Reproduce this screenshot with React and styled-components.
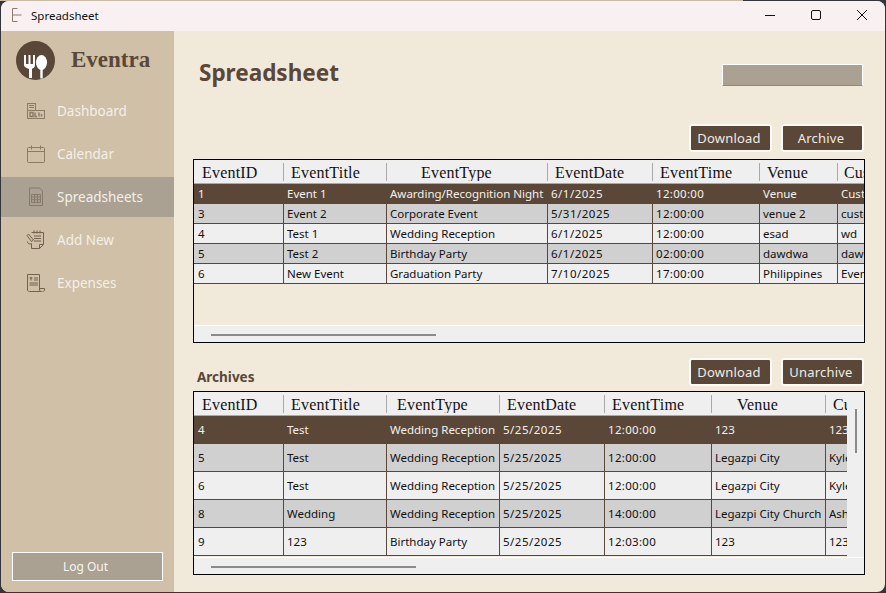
import React from 'react';
import styled, { createGlobalStyle } from 'styled-components';

const GlobalStyle = createGlobalStyle`
  html, body {
    margin: 0;
    padding: 0;
    height: 100%;
    overflow: hidden;
  }
  * {
    box-sizing: border-box;
  }
`;

const BROWN = '#5a4738';
const TAN = '#cfc0a7';
const TAUPE = '#aaa193';
const CREAM = '#f1e9da';
const UI_FONT = '"Noto Sans", "Open Sans", sans-serif';
const HEAD_FONT = '"Liberation Serif", serif';

const mainColumns = [
  { title: 'EventID', width: 90, pad: 8 },
  { title: 'EventTitle', width: 103, pad: 7 },
  { title: 'EventType', width: 161, pad: 34 },
  { title: 'EventDate', width: 105, pad: 7, tracking: 0.5 },
  { title: 'EventTime', width: 107, pad: 7, tracking: 0.3 },
  { title: 'Venue', width: 78, pad: 7 },
  { title: 'Customer', width: 90, pad: 6 },
];

const archiveColumns = [
  { title: 'EventID', width: 90, pad: 8 },
  { title: 'EventTitle', width: 103, pad: 7 },
  { title: 'EventType', width: 113, pad: 10 },
  { title: 'EventDate', width: 105, pad: 7, tracking: 0.5 },
  { title: 'EventTime', width: 107, pad: 7, tracking: 0.3 },
  { title: 'Venue', width: 114, pad: 25 },
  { title: 'Customer', width: 90, pad: 7 },
];

const mainRows = [
  ['1', 'Event 1', 'Awarding/Recognition Night', '6/1/2025', '12:00:00', 'Venue', 'Customer'],
  ['3', 'Event 2', 'Corporate Event', '5/31/2025', '12:00:00', 'venue 2', 'customer 2'],
  ['4', 'Test 1', 'Wedding Reception', '6/1/2025', '12:00:00', 'esad', 'wd'],
  ['5', 'Test 2', 'Birthday Party', '6/1/2025', '02:00:00', 'dawdwa', 'dawdwa'],
  ['6', 'New Event', 'Graduation Party', '7/10/2025', '17:00:00', 'Philippines', 'Event'],
];

const archiveRows = [
  ['4', 'Test', 'Wedding Reception', '5/25/2025', '12:00:00', '123', '123'],
  ['5', 'Test', 'Wedding Reception', '5/25/2025', '12:00:00', 'Legazpi City', 'Kyle'],
  ['6', 'Test', 'Wedding Reception', '5/25/2025', '12:00:00', 'Legazpi City', 'Kyle'],
  ['8', 'Wedding', 'Wedding Reception', '5/25/2025', '14:00:00', 'Legazpi City Church', 'Ashley'],
  ['9', '123', 'Birthday Party', '5/25/2025', '12:03:00', '123', '123'],
];

const DashboardIcon = () => (
  <svg width="20" height="18" viewBox="0 0 20 18" fill="none" stroke="#8b7a66" strokeWidth="1">
    <rect x="1.500" y="1.500" width="8" height="7" />
    <path d="M3 3.500h5M3 5.500h5" />
    <rect x="1.500" y="8.500" width="17" height="8" />
    <path d="M4 10.500h3v4H4zM9 10.500v4h2M13 10.500v4M15.500 12v2.500" strokeWidth="1.400" />
  </svg>
);

const CalendarIcon = () => (
  <svg width="20" height="20" viewBox="0 0 20 20" fill="none" stroke="#8b7a66" strokeWidth="1">
    <rect x="1.500" y="3.500" width="17" height="15" rx="1" />
    <path d="M1.500 7.500h17M5.500 1.500v4M14.500 1.500v4" />
  </svg>
);

const SheetIcon = () => (
  <svg width="20" height="20" viewBox="0 0 20 20" fill="none" stroke="#857a6b" strokeWidth="1">
    <path d="M3.500 1h10l3 3v14.500h-13z" />
    <path d="M5.500 7.500h9v8h-9zM5.500 10h9M5.500 12.700h9M8.500 7.500v8M11.500 7.500v8" />
  </svg>
);

const AddNewIcon = () => (
  <svg width="20" height="20" viewBox="0 0 20 20" fill="none" stroke="#75614d" strokeWidth="1">
    <path d="M5.500 2.500h12v12l-4 4h-8v-5" />
    <path d="M8 .5v3M11 .5v3M14 .5v3M8 6h7M8 8.500h7M8 11h7M13.500 18.500v-4h4" />
    <path d="M1 5.500l1.500-1.500 5 6-2 1.500z" />
    <path d="M1.500 11.500c0 2 1 2.500 4 2.500" />
  </svg>
);

const ExpensesIcon = () => (
  <svg width="20" height="20" viewBox="0 0 20 20" fill="none" stroke="#75614d" strokeWidth="1">
    <path d="M1.500 1.500h12v15.500c0 1 1 1.500 2 1.500H3.500c-1 0-2-.5-2-1.500z" />
    <path d="M13.500 15.500h5v1.500c0 1-1 1.500-2 1.500" />
    <path d="M5 4v3.500M3.500 5h3M8 5h4M8 7h4M3.500 10h8.500M3.500 12h8.500" />
  </svg>
);

const LogoMark = () => (
  <svg width="39" height="39" viewBox="0 0 39 39">
    <circle cx="19.500" cy="19.500" r="19.500" fill={BROWN} />
    <path
      d="M8 14h2v9h2.500v-9h2v9H17v-9h2v10c0 2-1.500 3.500-3 3.800V37h-3v-9.200c-2-.3-5-1.800-5-3.800z"
      fill="#ffffff"
    />
    <ellipse cx="25.500" cy="21.500" rx="5.500" ry="7.500" fill="#ffffff" />
    <rect x="24.300" y="27" width="2.400" height="10.500" fill="#ffffff" />
  </svg>
);

const navItems = [
  { label: 'Dashboard', icon: <DashboardIcon /> },
  { label: 'Calendar', icon: <CalendarIcon /> },
  { label: 'Spreadsheets', icon: <SheetIcon />, active: true },
  { label: 'Add New', icon: <AddNewIcon /> },
  { label: 'Expenses', icon: <ExpensesIcon /> },
];

const DataTable = ({ columns, rows, rowHeight, thumbWidth, vertical }) => {
  const template = columns.map((c) => `${c.width}px`).join(' ');
  return (
    <TableBox>
      <TableBody>
        <TableViewport>
          <HeaderRow $template={template}>
            {columns.map((c) => (
              <HeaderCell key={c.title} $pad={c.pad}>{c.title}</HeaderCell>
            ))}
          </HeaderRow>
          {rows.map((row, i) => (
            <DataRow key={row[0]} $template={template} $height={rowHeight} $index={i}>
              {row.map((value, j) => (
                <DataCell key={j} $tracking={columns[j].tracking}>{value}</DataCell>
              ))}
            </DataRow>
          ))}
        </TableViewport>
        {vertical && (
          <VerticalTrack>
            <VerticalThumb />
          </VerticalTrack>
        )}
      </TableBody>
      <HorizontalTrack>
        <HorizontalThumb style={{ width: thumbWidth }} />
      </HorizontalTrack>
    </TableBox>
  );
};

const App = () => (
  <Screen>
    <GlobalStyle />
    <AppWindow>
      <TitleBar>
        <TitleLeft>
          <svg width="14" height="16" viewBox="0 0 14 16" fill="none" stroke="#8a7a72" strokeWidth="1">
            <path d="M2.500 1.500h5M2.500 1.500v13M2.500 14.500h5M2.500 8h9" />
          </svg>
          <span>Spreadsheet</span>
        </TitleLeft>
        <WindowControls>
          <WindowButton aria-label="Minimize">
            <svg width="12" height="12" viewBox="0 0 12 12" stroke="#111" strokeWidth="1">
              <path d="M1 6.500h10" />
            </svg>
          </WindowButton>
          <WindowButton aria-label="Maximize">
            <svg width="12" height="12" viewBox="0 0 12 12" fill="none" stroke="#111" strokeWidth="1">
              <rect x="1.500" y="1.500" width="9" height="9" rx="1.500" />
            </svg>
          </WindowButton>
          <WindowButton aria-label="Close">
            <svg width="12" height="12" viewBox="0 0 12 12" stroke="#111" strokeWidth="1">
              <path d="M1 1l10 10M11 1L1 11" />
            </svg>
          </WindowButton>
        </WindowControls>
      </TitleBar>
      <Layout>
        <Sidebar>
          <Brand>
            <LogoMark />
            <BrandName>Eventra</BrandName>
          </Brand>
          <NavList>
            {navItems.map((item) => (
              <NavItem key={item.label} $active={item.active}>
                <NavIcon>{item.icon}</NavIcon>
                <span>{item.label}</span>
              </NavItem>
            ))}
          </NavList>
          <LogOutButton>Log Out</LogOutButton>
        </Sidebar>
        <Main>
          <PageHeader>
            <PageTitle>Spreadsheet</PageTitle>
            <SearchBox />
          </PageHeader>
          <Toolbar>
            <ActionButton>Download</ActionButton>
            <ActionButton>Archive</ActionButton>
          </Toolbar>
          <DataTable columns={mainColumns} rows={mainRows} rowHeight={20} thumbWidth={225} />
          <ArchiveToolbar>
            <SectionLabel>Archives</SectionLabel>
            <ActionButton>Download</ActionButton>
            <ActionButton>Unarchive</ActionButton>
          </ArchiveToolbar>
          <DataTable columns={archiveColumns} rows={archiveRows} rowHeight={28} thumbWidth={205} vertical />
        </Main>
      </Layout>
    </AppWindow>
  </Screen>
);

const Screen = styled.div`
  width: 100vw;
  height: 100vh;
  padding: 1px;
  background:
    linear-gradient(90deg, #c9bba6 743px, #34343a 743px) top / 100% 1px no-repeat,
    #34343a;
  font-family: ${UI_FONT};
`;

const AppWindow = styled.div`
  height: 100%;
  display: flex;
  flex-direction: column;
  border-radius: 8px;
  overflow: hidden;
  background: ${CREAM};
`;

const TitleBar = styled.div`
  height: 30px;
  flex: none;
  display: flex;
  align-items: center;
  justify-content: space-between;
  padding-bottom: 2px;
  background: #f9f0f1;
  color: #111;
  font-size: 11.500px;
`;

const TitleLeft = styled.div`
  display: flex;
  align-items: center;
  gap: 7px;
  padding-left: 9px;
`;

const WindowControls = styled.div`
  display: flex;
  height: 100%;
`;

const WindowButton = styled.div`
  width: 46px;
  display: flex;
  align-items: center;
  justify-content: center;
`;

const Layout = styled.div`
  flex: 1;
  display: flex;
  min-height: 0;
`;

const Sidebar = styled.aside`
  width: 173px;
  flex: none;
  display: flex;
  flex-direction: column;
  background: ${TAN};
`;

const Brand = styled.div`
  display: flex;
  align-items: center;
  gap: 16px;
  padding: 10px 0 0 15px;
`;

const BrandName = styled.div`
  font-family: ${HEAD_FONT};
  font-weight: 700;
  font-size: 23px;
  color: ${BROWN};
  margin-bottom: 2px;
`;

const NavList = styled.nav`
  display: flex;
  flex-direction: column;
  gap: 3px;
  margin-top: 11px;
`;

const NavItem = styled.div`
  height: 40px;
  display: flex;
  align-items: center;
  gap: 11px;
  padding-left: 25px;
  font-size: 13.500px;
  color: #f4f0e8;
  background: ${(p) => (p.$active ? TAUPE : 'transparent')};
`;

const NavIcon = styled.div`
  width: 20px;
  height: 20px;
  display: flex;
  align-items: center;
  justify-content: center;
`;

const LogOutButton = styled.div`
  margin: auto 0 11px 11px;
  width: 151px;
  height: 29px;
  display: flex;
  align-items: center;
  justify-content: center;
  padding: 0 4px 1px 0;
  border: 1px solid #ffffff;
  background: ${TAUPE};
  color: #f8f5ef;
  font-size: 12px;
`;

const Main = styled.main`
  flex: 1;
  min-width: 0;
  display: flex;
  flex-direction: column;
  padding-left: 19px;
  padding-right: 20px;
`;

const PageHeader = styled.div`
  height: 93px;
  flex: none;
  display: flex;
  justify-content: space-between;
  padding: 25px 2px 0 6px;
`;

const PageTitle = styled.h1`
  margin: 0;
  font-size: 22.500px;
  line-height: 33px;
  font-weight: 700;
  color: ${BROWN};
`;

const SearchBox = styled.div`
  width: 141px;
  height: 22px;
  margin-top: 8px;
  background: ${TAUPE};
  border: 1px solid #ffffff;
  border-bottom-color: #8f8a80;
`;

const Toolbar = styled.div`
  height: 28px;
  flex: none;
  display: flex;
  justify-content: flex-end;
  gap: 9px;
  margin: 0 1px 7px 0;
`;

const ArchiveToolbar = styled(Toolbar)`
  margin-top: 15px;
  margin-bottom: 5px;
  align-items: stretch;
`;

const SectionLabel = styled.div`
  margin-right: auto;
  padding: 11px 0 0 4px;
  font-size: 13.500px;
  font-weight: 700;
  line-height: 16px;
  color: ${BROWN};
`;

const ActionButton = styled.div`
  width: 83px;
  display: flex;
  align-items: center;
  justify-content: center;
  padding-right: 3px;
  border: 2px solid #fbfaf7;
  border-radius: 3px;
  background: ${BROWN};
  color: #efece6;
  font-size: 13px;
  letter-spacing: 0.2px;
`;

const TableBox = styled.div`
  height: 184px;
  flex: none;
  display: flex;
  flex-direction: column;
  border: 1px solid #000;
  overflow: hidden;
`;

const TableBody = styled.div`
  height: 165px;
  flex: none;
  display: flex;
  min-width: 0;
`;

const TableViewport = styled.div`
  flex: 1;
  min-width: 0;
  overflow: hidden;
`;

const HeaderRow = styled.div`
  display: grid;
  grid-template-columns: ${(p) => p.$template};
  height: 24px;
  align-items: center;
  background: #efefef;
  border-bottom: 1px solid #a9a9a9;
  font-family: ${HEAD_FONT};
  font-size: 16px;
  letter-spacing: 0.2px;
  color: #111;
`;

const HeaderCell = styled.div`
  height: 18px;
  line-height: 20px;
  padding-left: ${(p) => p.$pad}px;
  border-right: 1px solid #a9a9a9;
  white-space: nowrap;
  overflow: hidden;
  &:last-child {
    border-right: none;
  }
`;

const rowBackground = (p) => {
  if (p.$index === 0) return BROWN;
  return p.$index % 2 === 1 ? '#d0d0d0' : '#efefef';
};

const DataRow = styled.div`
  display: grid;
  grid-template-columns: ${(p) => p.$template};
  height: ${(p) => p.$height}px;
  background: ${rowBackground};
  color: ${(p) => (p.$index === 0 ? '#f4f1ec' : '#111')};
  border-bottom: 1px solid ${BROWN};
  font-size: 11.500px;
`;

const DataCell = styled.div`
  display: flex;
  align-items: center;
  padding-left: 3px;
  letter-spacing: ${(p) => p.$tracking || 0}px;
  border-right: 1px solid ${BROWN};
  white-space: nowrap;
  overflow: hidden;
  &:first-child {
    padding-left: 4px;
  }
  &:last-child {
    border-right: none;
  }
`;

const VerticalTrack = styled.div`
  width: 17px;
  flex: none;
  padding: 17px 0 0 8px;
  background: #efefef;
`;

const VerticalThumb = styled.div`
  width: 2px;
  height: 44px;
  background: #8a8a8a;
`;

const HorizontalTrack = styled.div`
  flex: 1;
  padding: 8px 0 0 17px;
  background: #efefef;
  border-top: 1px solid #ffffff;
`;

const HorizontalThumb = styled.div`
  height: 2px;
  background: #8a8a8a;
`;

export default App;
